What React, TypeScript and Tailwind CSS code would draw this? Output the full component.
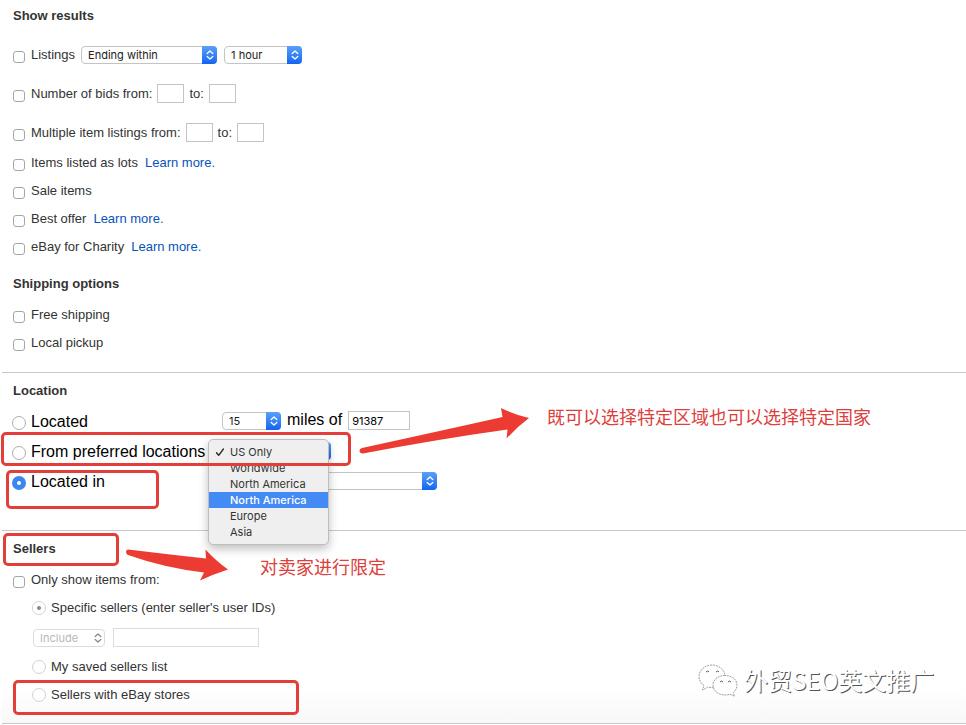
import type { ReactNode } from "react";

function Chevrons() {
  return (
    <svg viewBox="0 0 8 10" className="h-2.5 w-2" fill="none" stroke="currentColor" strokeWidth="1.3" strokeLinecap="round" strokeLinejoin="round">
      <path d="M1.2 3.6 4 1l2.8 2.6M1.2 6.4 4 9l2.8-2.6" />
    </svg>
  );
}

function Select({ label, options, width, disabled }: { label: string; options: string[]; width: string; disabled?: boolean }) {
  return (
    <span className={`relative inline-flex shrink-0 ${width}`}>
      <select
        aria-label={label}
        disabled={disabled}
        className={`h-[18px] w-full appearance-none rounded border bg-white pl-1.5 font-[Inter,'Liberation_Sans',sans-serif] text-[11px] leading-4 ${
          disabled ? "border-[#dcdcdc] text-[#b8b8b8] opacity-100" : "border-[#c4c4c4] text-[#222]"
        }`}
      >
        {options.map((o, i) => (
          <option key={i}>{o}</option>
        ))}
      </select>
      <span
        className={`pointer-events-none absolute inset-y-0 right-0 flex w-[15px] items-center justify-center rounded-r ${
          disabled ? "text-[#8a8a8a]" : "bg-linear-to-b from-[#5a9ff8] to-[#1064f2] text-white"
        }`}
      >
        <Chevrons />
      </span>
    </span>
  );
}

function Field({ label, width, disabled }: { label: string; width: string; disabled?: boolean }) {
  return (
    <input
      type="text"
      aria-label={label}
      disabled={disabled}
      className={`-mt-px h-[19px] shrink-0 border bg-white px-[3px] font-[Inter,'Liberation_Sans',sans-serif] text-[11px] text-black ${
        disabled ? "border-[#dcdcdc]" : "border-[#c4c4c4]"
      } ${width}`}
    />
  );
}

function Check({ id, label, children }: { id: string; label: string; children?: ReactNode }) {
  return (
    <div className="flex h-7 items-center">
      <input id={id} type="checkbox" className="mt-1 size-3 shrink-0 appearance-none rounded-[3px] border border-[#a6a6a6] bg-white checked:bg-[#3b86f7]" />
      <label htmlFor={id} className="ml-1.5 whitespace-nowrap">
        {label}
      </label>
      {children}
    </div>
  );
}

function LearnMore() {
  return (
    <a href="#learn" className="ml-[7px] whitespace-nowrap text-[#0654ba]">
      Learn more.
    </a>
  );
}

function LocationRadio({ id, label, checked }: { id: string; label: string; checked?: boolean }) {
  return (
    <>
      <input
        id={id}
        name="location"
        type="radio"
        defaultChecked={checked}
        className="mt-1 -ml-px size-3.5 shrink-0 appearance-none rounded-full border border-[#adadad] bg-white checked:border-[5px] checked:border-[#3b86f0]"
      />
      <label htmlFor={id} className="ml-[5px] pt-0.5 whitespace-nowrap">
        {label}
      </label>
    </>
  );
}

function SellerRadio({ id, label, checked }: { id: string; label: string; checked?: boolean }) {
  return (
    <div className="ml-[19px] flex h-7 items-center">
      <input
        id={id}
        name="seller"
        type="radio"
        disabled
        defaultChecked={checked}
        className="size-3.5 shrink-0 appearance-none rounded-full border border-[#d2d2d2] bg-white checked:bg-[radial-gradient(circle,#8c8c8c_1.5px,transparent_2.5px)]"
      />
      <label htmlFor={id} className="ml-[5px] whitespace-nowrap">
        {label}
      </label>
    </div>
  );
}

const regions = ["US Only", "Worldwide", "North America", "North America", "Europe", "Asia"];

function RegionMenu() {
  return (
    <ul
      role="listbox"
      aria-label="Preferred location"
      className="absolute -top-[3px] -left-px z-10 w-[121px] rounded-[5px] border border-[#bdbdbd] bg-[#efefef] py-1 font-[Inter,'Liberation_Sans',sans-serif] text-[11px] leading-4 text-[#333] shadow-[0_4px_10px_rgba(0,0,0,0.25)]"
    >
      {regions.map((r, i) => (
        <li
          key={i}
          role="option"
          aria-selected={i === 0}
          className={`flex h-4 items-center ${i === 3 ? "bg-[#438af5] font-medium text-white" : ""}`}
        >
          <span className="flex w-[21px] justify-center">
            {i === 0 && (
              <svg viewBox="0 0 10 10" className="size-2.5" fill="none" stroke="#222" strokeWidth="1.3" strokeLinecap="round" strokeLinejoin="round">
                <path d="M1.5 5.800 3.700 8.300 8.400 2" />
              </svg>
            )}
          </span>
          {r}
        </li>
      ))}
    </ul>
  );
}

function Heading({ children }: { children: ReactNode }) {
  return <h2 className="h-5 text-[13px] leading-5 font-bold text-[#333]">{children}</h2>;
}

function Mark({ place }: { place: string }) {
  return <div className={`pointer-events-none absolute z-20 rounded-[5px] border-[3px] border-[#e23f3b] ${place}`} />;
}

export default function App() {
  return (
    <main className="relative overflow-hidden bg-white font-['Liberation_Sans',Arial,sans-serif] text-[13px] leading-5 text-[#333]">
      <section className="pt-1.5 pb-[15px] pl-[13px]">
        <Heading>Show results</Heading>
        <div className="mt-[15px] flex flex-col gap-[11px]">
          <Check id="listings" label="Listings">
            <div className="ml-1.5 flex gap-[7px]">
              <Select label="Listing time" width="w-[136px]" options={["Ending within", "Ending in more than", "Started within"]} />
              <Select label="Hours" width="w-[78px]" options={["1 hour", "2 hours", "3 hours"]} />
            </div>
          </Check>
          <Check id="bids" label="Number of bids from:">
            <div className="ml-[5px] flex items-center gap-[5px]">
              <Field label="Minimum bids" width="w-[27px]" />
              to:
              <Field label="Maximum bids" width="w-[27px]" />
            </div>
          </Check>
          <Check id="multiple" label="Multiple item listings from:">
            <div className="ml-[5px] flex items-center gap-[5px]">
              <Field label="Minimum items" width="w-[27px]" />
              to:
              <Field label="Maximum items" width="w-[27px]" />
            </div>
          </Check>
        </div>
        <div className="mt-0.5">
          <Check id="lots" label="Items listed as lots">
            <LearnMore />
          </Check>
          <Check id="sale" label="Sale items" />
          <Check id="offer" label="Best offer">
            <LearnMore />
          </Check>
          <Check id="charity" label="eBay for Charity">
            <LearnMore />
          </Check>
        </div>
        <div className="mt-[13px]">
          <Heading>Shipping options</Heading>
          <div className="mt-[7px]">
            <Check id="free" label="Free shipping" />
            <Check id="pickup" label="Local pickup" />
          </div>
        </div>
      </section>

      <section className="ml-0.5 border-t border-[#c8c8c8] pt-2 pb-[34px] pl-[11px]">
        <Heading>Location</Heading>
        <div className="mt-[5px] text-base leading-5 text-black">
          <div className="flex h-[30px] items-center">
            <div className="flex w-[209px] items-center">
              <LocationRadio id="located" label="Located" />
            </div>
            <Select label="Miles" width="w-[59px]" options={["15", "25", "50"]} />
            <label htmlFor="zip" className="mx-1.5 -mt-0.5 whitespace-nowrap">
              miles of
            </label>
            <input
              id="zip"
              type="text"
              defaultValue="91387"
              className="-mt-px h-[19px] w-[62px] border border-[#c4c4c4] bg-white px-[3px] font-[Inter,'Liberation_Sans',sans-serif] text-[11px] text-black"
            />
          </div>
          <div className="flex h-[30px] items-center">
            <div className="flex w-[196px] items-center">
              <LocationRadio id="preferred" label="From preferred locations" />
            </div>
            <div className="relative flex">
              <Select label="Preferred locations" width="w-[122px]" options={regions.slice(0, 3)} />
              <RegionMenu />
            </div>
          </div>
          <div className="flex h-[30px] items-center">
            <div className="flex w-[209px] items-center">
              <LocationRadio id="country" label="Located in" checked />
            </div>
            <Select label="Country" width="w-[215px]" options={[""]} />
          </div>
        </div>
      </section>

      <section className="ml-0.5 border-t border-b border-[#c8c8c8] bg-linear-to-b from-white from-80% to-[#f8f8f8] pt-2 pb-3.5 pl-[11px]">
        <Heading>Sellers</Heading>
        <div className="mt-[7px]">
          <Check id="only" label="Only show items from:" />
          <SellerRadio id="specific" label="Specific sellers (enter seller's user IDs)" checked />
          <div className="ml-5 flex h-[31px] items-center gap-2">
            <Select label="Include or exclude" width="w-[72px]" options={["Include", "Exclude"]} disabled />
            <Field label="Seller user IDs" width="w-[146px]" disabled />
          </div>
          <SellerRadio id="saved" label="My saved sellers list" />
          <SellerRadio id="stores" label="Sellers with eBay stores" />
        </div>
      </section>

      <Mark place="left-px top-[432px] h-[34px] w-[350px]" />
      <Mark place="left-[6px] top-[470px] h-[39px] w-[153px]" />
      <Mark place="left-[3px] top-[533px] h-[33px] w-[116px]" />
      <Mark place="left-[13px] top-[680px] h-[35px] w-[286px]" />

      <svg className="pointer-events-none absolute top-[407px] left-[359px] h-[48px] w-[171px]" viewBox="0 0 171 48" fill="#ec3b32">
        <path d="M3 41Q90 22 143.500 10L142 1Q156 8 170 11 158 20 147.500 31.500L148.500 22.500Q80 32 4 46.500.5 46.500.5 43.500.5 41.500 3 41Z" />
      </svg>
      <svg className="pointer-events-none absolute top-[548px] left-[125px] h-[34px] w-[104px]" viewBox="0 0 104 34" fill="#ec3b32">
        <path d="M3.500 1.500Q40 6 81 10.500L80.500 1.500Q91 13 103 21.500 89 26 75 32.500L79 24.500Q40 20 3 7 1 6 1 4 1 1.500 3.500 1.500Z" />
      </svg>
      <p className="absolute top-[403px] left-[547px] font-['Noto_Sans_CJK_SC',sans-serif] text-[18px] leading-[26px] whitespace-nowrap text-[#dc403c]">
        既可以选择特定区域也可以选择特定国家
      </p>
      <p className="absolute top-[553px] left-[260px] font-['Noto_Sans_CJK_SC',sans-serif] text-[18px] leading-[26px] whitespace-nowrap text-[#dc403c]">
        对卖家进行限定
      </p>

      <div className="absolute top-[662px] left-[698px] flex items-center gap-1.5">
        <svg viewBox="0 0 40 34" className="h-[34px] w-10" fill="#fff" stroke="#888" strokeWidth="0.8" strokeDasharray="2 0.8">
          <path d="M14 2C7 2 1 7 1 13.500c0 4 2 7 5 9L4.500 27l5.500-3c2 .6 5 .8 7 .5C27 24 28 18 27 12 26 6 20 2 14 2Z" />
          <path d="M27 12.500c-7 0-12 4-12 9.500s5 10 12 10c2 0 3.500-.3 5-.8l4.500 2-1.200-3.700c2.400-2 3.700-4.500 3.700-7.500 0-5.500-5-9.500-12-9.500Z" />
          <path d="M8 9q2-2 3 0M18 9q2-2 3 0M22 19q2-2 3 0M30 19q2-2 3 0" fill="none" stroke="#333" strokeDasharray="none" />
        </svg>
        <span className="font-['Noto_Sans_CJK_SC',sans-serif] text-[24px] leading-9 font-normal whitespace-nowrap text-white [text-shadow:1px_1px_0_#555]">
          外贸SEO英文推广
        </span>
      </div>
    </main>
  );
}
